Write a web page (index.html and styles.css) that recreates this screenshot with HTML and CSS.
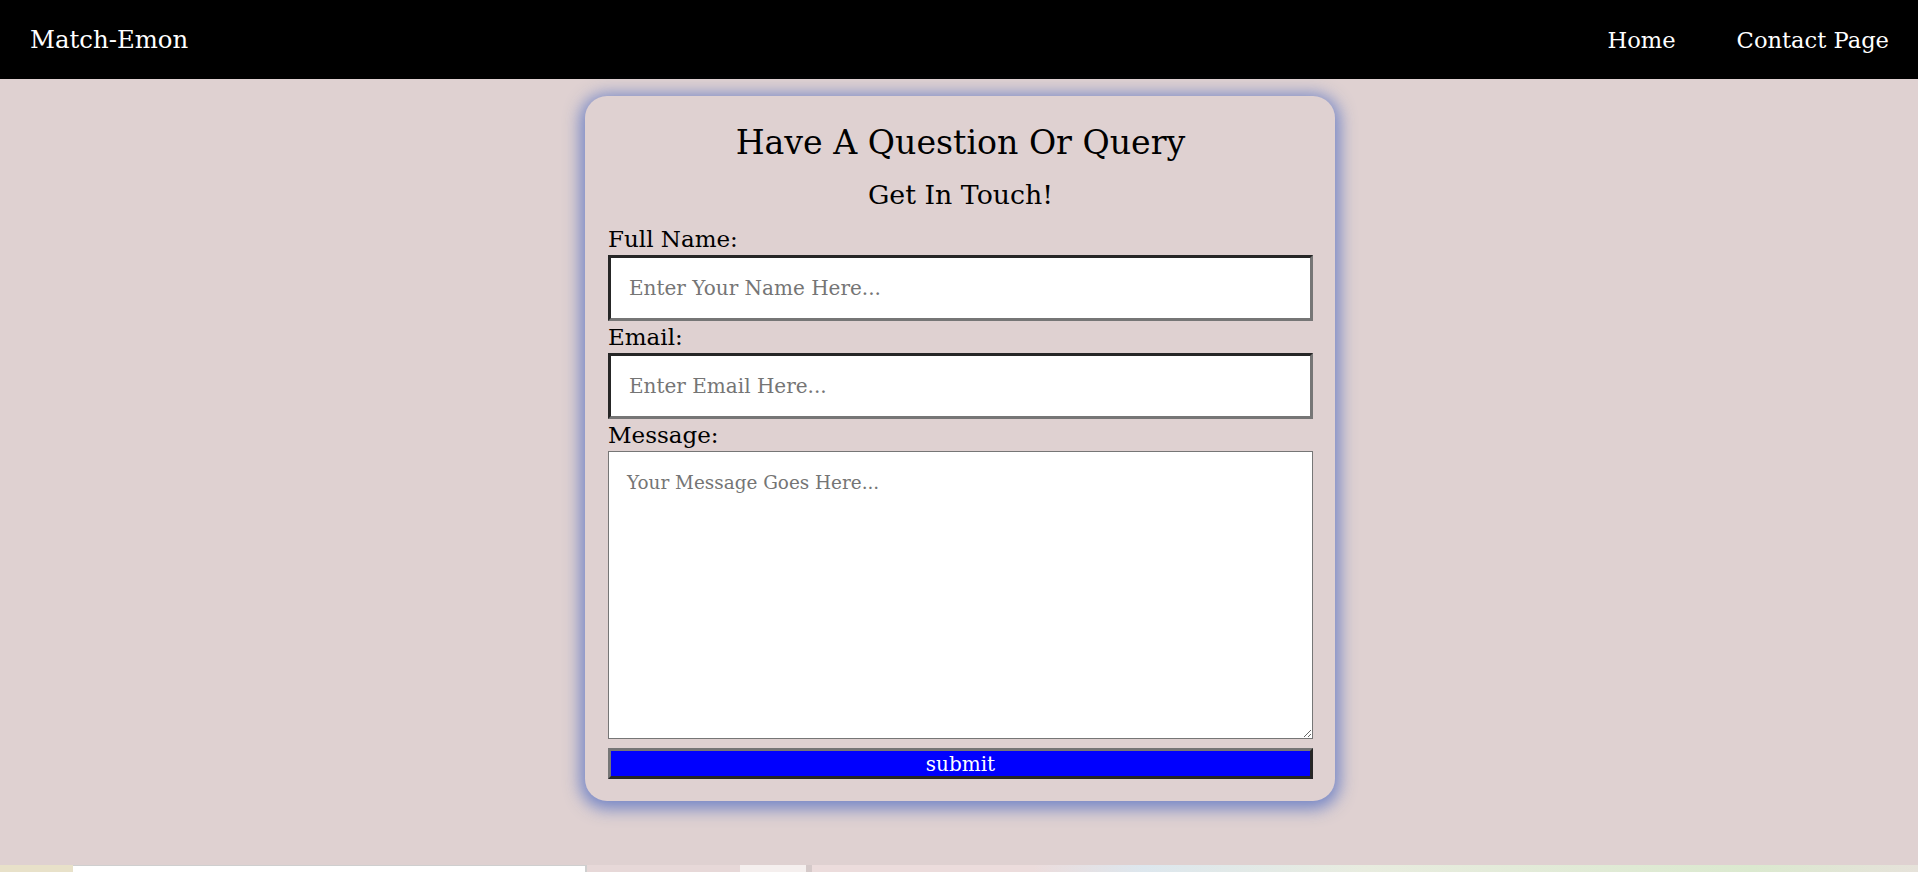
FILE: index.html
```html
<!DOCTYPE html>
<html lang="en">
<head>
<meta charset="utf-8">
<title>Contact - Match-Emon</title>
<link rel="stylesheet" href="styles.css">
</head>
<body>
<nav class="navbar">
  <a class="brand" href="#">Match-Emon</a>
  <ul class="nav-links">
    <li><a href="#">Home</a></li>
    <li><a href="#">Contact Page</a></li>
  </ul>
</nav>
<main class="page">
  <form class="card">
    <h1 class="title">Have A Question Or Query</h1>
    <h2 class="subtitle">Get In Touch!</h2>
    <label class="label first" for="name">Full Name:</label>
    <input class="field" id="name" type="text" placeholder="Enter Your Name Here...">
    <label class="label" for="email">Email:</label>
    <input class="field" id="email" type="email" placeholder="Enter Email Here...">
    <label class="label" for="msg">Message:</label>
    <textarea class="area" id="msg" placeholder="Your Message Goes Here..."></textarea>
    <button class="submit" type="submit">submit</button>
  </form>
</main>
<div class="strip">
  <div class="s s1"></div>
  <div class="s s2"></div>
  <div class="s s3"></div>
  <div class="s s4"></div>
  <div class="s s5"></div>
</div>
</body>
</html>
```
FILE: styles.css
```css
html, body {
  margin: 0;
  padding: 0;
}
body {
  background: #dfd1d1;
  font-family: "DejaVu Serif", "Liberation Serif", serif;
  color: #000;
}
.navbar {
  background: #000;
  height: 79px;
  display: flex;
  align-items: center;
  justify-content: space-between;
  padding: 0 29px 0 30px;
  box-sizing: border-box;
}
.brand {
  color: #fff;
  text-decoration: none;
  font-size: 24.4px;
}
.nav-links {
  list-style: none;
  margin: 0;
  padding: 0;
  display: flex;
  gap: 61px;
}
.nav-links a {
  color: #fff;
  text-decoration: none;
  font-size: 22.6px;
}
.page {
  display: flex;
  justify-content: center;
  padding: 17px 0 0 2px;
  height: 786px;
  box-sizing: border-box;
}
.card {
  width: 750px;
  height: 705px;
  box-sizing: border-box;
  padding: 27px 22px 0 23px;
  background: #dfd1d1;
  border-radius: 22px;
  box-shadow: 0 3px 16px 5px rgba(100, 122, 196, 0.85);
  display: flex;
  flex-direction: column;
}
.title {
  margin: 0;
  font-size: 33.2px;
  font-weight: normal;
  text-align: center;
  line-height: 40px;
  height: 40px;
}
.subtitle {
  margin: 16px 0 0;
  font-size: 26.8px;
  font-weight: normal;
  text-align: center;
  line-height: 32px;
  height: 32px;
}
.label {
  font-size: 23px;
  line-height: 32px;
  height: 32px;
}
.label.first {
  margin-top: 12px;
}
.field {
  height: 66px;
  box-sizing: border-box;
  border-style: solid;
  border-width: 3px;
  border-color: #262626 #767676 #767676 #262626;
  background: #fff;
  padding: 0 18px;
  font-family: inherit;
  font-size: 20px;
  outline: none;
  margin: 0;
}
.field::placeholder, .area::placeholder {
  color: #757575;
}
.area {
  height: 288px;
  box-sizing: border-box;
  border: 1px solid #767676;
  background: #fff;
  padding: 20px 18px;
  font-family: inherit;
  font-size: 18.4px;
  resize: vertical;
  margin: 0;
}
.submit {
  margin-top: 9px;
  height: 31px;
  box-sizing: border-box;
  background: #0000ff;
  color: #fff;
  border-style: solid;
  border-width: 3px;
  border-color: #767676 #262626 #262626 #767676;
  font-family: inherit;
  font-size: 20px;
  line-height: 24px;
  padding: 0;
}
.strip {
  display: flex;
  height: 7px;
}
.s { height: 7px; }
.s1 { width: 73px; background: #e8e1c9; }
.s2 { width: 514px; background: #fff; border-top: 1px solid #cfcfcf; box-sizing: border-box; border-right: 2px solid #cfcfcf; }
.s3 { width: 153px; background: #e7d8d8; }
.s4 { width: 66px; background: #f5efee; }
.s5 { flex: 1; background: linear-gradient(90deg, #ecdcdc 0%, #ecdcdc 20%, #dde7ee 30%, #e8ecdf 50%, #dbe9cf 85%, #e6e2da 100%); border-left: 6px solid #d5c9c9; }
```
